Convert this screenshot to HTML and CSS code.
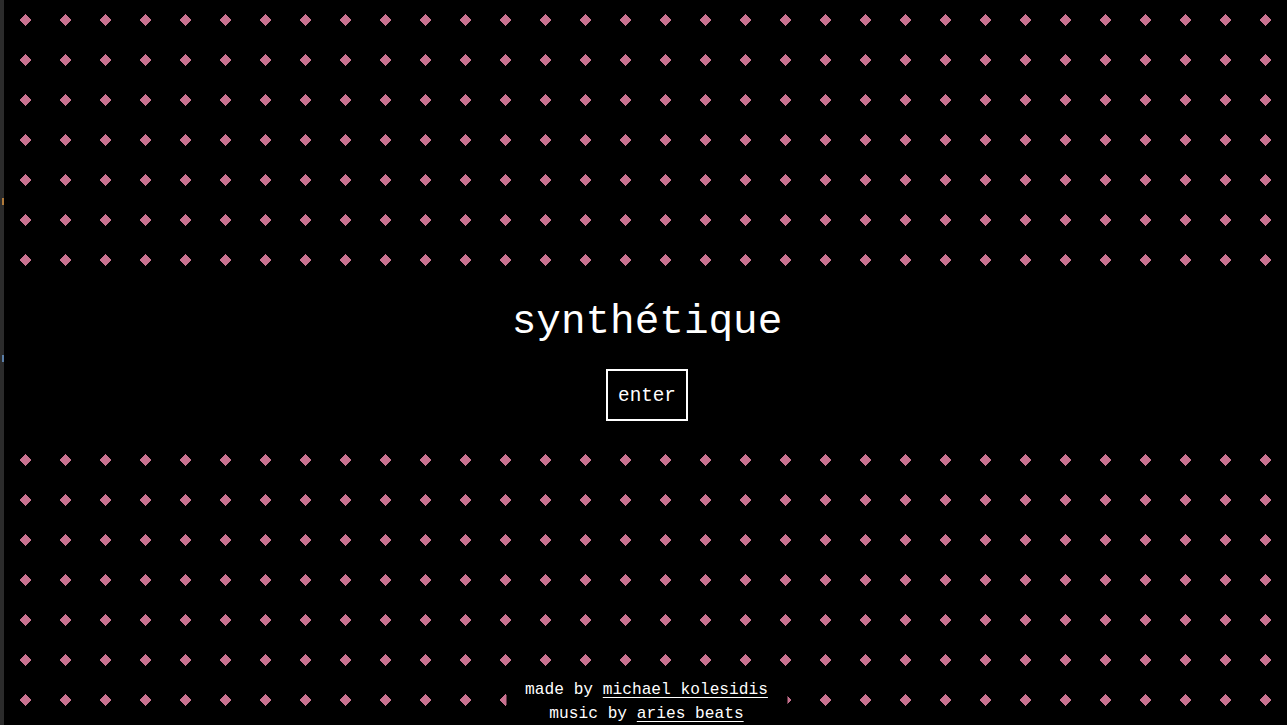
FILE: index.html
```html
<!DOCTYPE html>
<html lang="en">
<head>
<meta charset="utf-8">
<title>synthétique</title>
<link rel="stylesheet" href="styles.css">
</head>
<body>
<div class="page">
  <aside class="edge">
    <span class="edge-mark edge-mark-a"></span>
    <span class="edge-mark edge-mark-b"></span>
  </aside>
  <main class="stage">
    <svg class="field" width="1283" height="280" shape-rendering="crispEdges" aria-hidden="true">
      <defs>
        <pattern id="dots-top" x="1" y="0" width="40" height="40" patternUnits="userSpaceOnUse">
          <polygon points="20,14 26,20 20,26 14,20" fill="#c8718f"/>
        </pattern>
      </defs>
      <rect width="100%" height="100%" fill="url(#dots-top)"/>
    </svg>
    <section class="intro">
      <h1 class="title">synthétique</h1>
      <button class="enter" type="button">enter</button>
    </section>
    <svg class="field" width="1283" height="280" shape-rendering="crispEdges" aria-hidden="true">
      <defs>
        <pattern id="dots-bottom" x="1" y="0" width="40" height="40" patternUnits="userSpaceOnUse">
          <polygon points="20,14 26,20 20,26 14,20" fill="#c8718f"/>
        </pattern>
      </defs>
      <rect width="100%" height="100%" fill="url(#dots-bottom)"/>
    </svg>
    <footer class="credits">
      <p>made by <a href="#">michael kolesidis</a></p>
      <p>music by <a href="#">aries beats</a></p>
    </footer>
  </main>
</div>
</body>
</html>
```
FILE: styles.css
```css
html, body {
  margin: 0;
  padding: 0;
  height: 100%;
  background: #000;
  overflow: hidden;
}

.page {
  display: flex;
  height: 725px;
  font-family: "Liberation Mono", "DejaVu Sans Mono", monospace;
  color: #fff;
}

.edge {
  width: 4px;
  flex: 0 0 4px;
  background: #2b2b2b;
  display: flex;
  flex-direction: column;
}

.edge-mark {
  display: block;
  width: 2px;
  height: 7px;
  margin-left: 2px;
}

.edge-mark-a {
  margin-top: 198px;
  background: #b07a3a;
}

.edge-mark-b {
  margin-top: 150px;
  background: #5a7ea8;
}

.stage {
  position: relative;
  flex: 1;
  display: flex;
  flex-direction: column;
}

.field {
  display: block;
  flex: 0 0 280px;
}

.intro {
  height: 160px;
  display: flex;
  flex-direction: column;
  align-items: center;
  justify-content: flex-start;
  padding-top: 18px;
  padding-left: 3px;
  box-sizing: border-box;
}

.title {
  margin: 0;
  font-size: 41px;
  font-weight: 400;
  line-height: 48px;
  letter-spacing: 0;
}

.enter {
  margin-top: 23px;
  width: 82px;
  height: 52px;
  box-sizing: border-box;
  padding: 3px 0 0;
  background: #000;
  color: #fff;
  border: 2px solid #fff;
  font-family: inherit;
  font-size: 19.3px;
  line-height: 45px;
  cursor: pointer;
}

.credits {
  position: absolute;
  bottom: 0;
  left: calc(50% + 1px);
  transform: translateX(-50%);
  width: 281px;
  height: 48px;
  box-sizing: border-box;
  padding-top: 1px;
  background: #000;
  text-align: center;
  font-size: 16.2px;
  line-height: 24px;
}

.credits p {
  margin: 0;
  white-space: nowrap;
}

.credits a {
  color: #fff;
  text-decoration: underline;
  text-underline-offset: 3px;
}
```
